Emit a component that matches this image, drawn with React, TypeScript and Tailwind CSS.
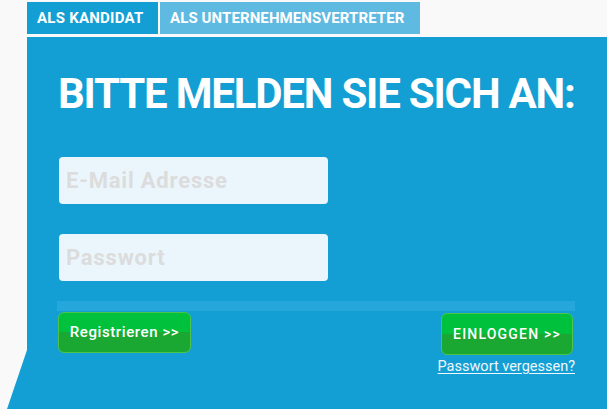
import React from "react";

export default function App() {
  return (
    <div
      className="w-[607px] h-[409px] bg-[#f9f9f9] overflow-hidden"
      style={{ fontFamily: "Roboto, 'Liberation Sans', sans-serif" }}
    >
      <div className="flex pl-[27px] pt-[2px] gap-[2px] h-[34px]">
        <div className="w-[131px] h-[32px] bg-[#139fd4] text-white font-bold text-[15px] leading-[32px] pl-[10px] tracking-[0.25px]">
          ALS KANDIDAT
        </div>
        <div className="w-[260px] h-[32px] bg-[#5fbae1] text-white font-bold text-[15px] leading-[32px] pl-[10px] tracking-[0.1px]">
          ALS UNTERNEHMENSVERTRETER
        </div>
      </div>
      <div className="mt-[3px] ml-[7px] h-[372px] bg-[#139fd4] pl-[51px] pr-[32px] [clip-path:polygon(20px_0,100%_0,100%_100%,0_100%,20px_313px)]">
        <h1 className="pt-[36px] text-white font-bold text-[42px] leading-[42px] tracking-[-1.2px] whitespace-nowrap">
          BITTE MELDEN SIE SICH AN:
        </h1>
        <div className="mt-[42px] flex flex-col gap-[30px] pl-[1px]">
          <input
            className="w-[269px] h-[47px] rounded-[4px] bg-[#eaf6fc] px-[7px] text-[22px] tracking-[0.8px] font-bold outline-none placeholder:text-[#dcdcdc]"
            placeholder="E-Mail Adresse"
          />
          <input
            className="w-[269px] h-[47px] rounded-[4px] bg-[#eaf6fc] px-[7px] text-[22px] tracking-[0.8px] font-bold outline-none placeholder:text-[#dcdcdc]"
            placeholder="Passwort"
          />
        </div>
        <div className="mt-[20px] -ml-[1px] h-[10px] bg-[#26a7db]" />
        <div className="flex justify-between items-start">
          <button className="mt-[1px] w-[133px] h-[41px] rounded-[6px] border border-[#4cc34a] bg-[linear-gradient(#00c13b_0%,#00c13b_50%,#1ba832_50%,#1ba832_100%)] text-white text-[15px] font-medium tracking-[0.6px] flex items-center justify-center">
            Registrieren &gt;&gt;
          </button>
          <div className="flex flex-col items-end">
            <button className="mt-[2px] mr-[2px] w-[132px] h-[42px] rounded-[6px] border border-[#4cc34a] bg-[linear-gradient(#00c13b_0%,#00c13b_50%,#1ba832_50%,#1ba832_100%)] text-white text-[14px] font-medium tracking-[1.2px] flex items-center justify-center">
              EINLOGGEN &gt;&gt;
            </button>
            <a className="mt-[3px] text-[14.5px] leading-[18px] text-[#eef8fd] underline underline-offset-[2px]">
              Passwort vergessen?
            </a>
          </div>
        </div>
      </div>
    </div>
  );
}
